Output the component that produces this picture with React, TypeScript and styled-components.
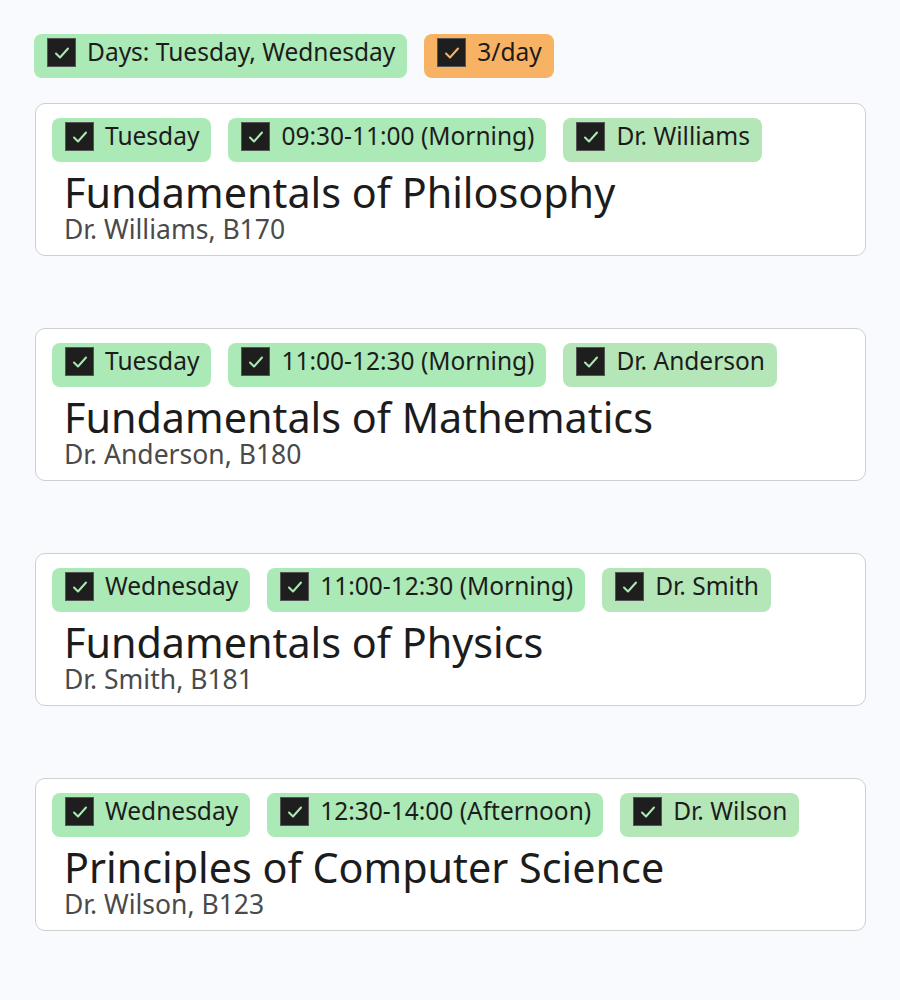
import React from "react";
import styled, { createGlobalStyle } from "styled-components";

const Global = createGlobalStyle`
  html, body { margin: 0; padding: 0; background: #f9fafe; }
  body { font-family: "Noto Sans", "Open Sans", sans-serif; color: #1c1c1c; }
`;

const Page = styled.div`
  padding: 34px 34px 40px 34px;
  display: flex;
  flex-direction: column;
  gap: 25px;
`;

const CardList = styled.div`
  display: flex;
  flex-direction: column;
  gap: 72px;
`;

const ChipRow = styled.div`
  display: flex;
  gap: 17px;
  flex-wrap: wrap;
`;

const Chip = styled.div<{ $tone: "green" | "light" | "orange" }>`
  display: flex;
  align-items: center;
  gap: 11px;
  height: 44px;
  box-sizing: border-box;
  padding: 0 12px 9px 13px;
  border-radius: 8px;
  font-size: 24.5px;
  color: #1c1c1c;
  white-space: nowrap;
  background: ${(p) =>
    p.$tone === "orange" ? "#f8b264" : p.$tone === "light" ? "#b5e6b8" : "#abe9b6"};
`;

const Box = styled.span`
  width: 29px;
  height: 29px;
  box-sizing: border-box;
  background: #1e1e1e;
  border: 1px solid #555;
  display: flex;
  align-items: center;
  justify-content: center;
  flex-shrink: 0;
  margin-top: 2px;
`;

const Card = styled.div`
  margin-left: 1px;
  width: 831px;
  box-sizing: border-box;
  height: 153px;
  background: #fff;
  border: 1.5px solid #cfcfcf;
  border-radius: 10px;
  padding: 14px 16px 0 16px;
`;

const Title = styled.div`
  font-size: 41.3px;
  line-height: 1.15;
  margin: 7px 0 0 12px;
  color: #1c1c1c;
  white-space: nowrap;
`;

const Sub = styled.div`
  font-size: 26.5px;
  line-height: 1;
  margin: 0 0 0 12px;
  color: #4a4a4a;
  white-space: nowrap;
`;

const Check: React.FC<{ color: string }> = ({ color }) => (
  <Box>
    <svg width="18" height="18" viewBox="0 0 18 18">
      <path d="M3 9.5 L7 13.5 L15 4.5" fill="none" stroke={color} strokeWidth="2" strokeLinecap="round" strokeLinejoin="round" />
    </svg>
  </Box>
);

const Tag: React.FC<{ tone?: "green" | "light" | "orange"; children: React.ReactNode }> = ({ tone = "green", children }) => (
  <Chip $tone={tone}>
    <Check color={tone === "orange" ? "#f8b264" : "#abe9b6"} />
    <span>{children}</span>
  </Chip>
);

const courses = [
  { day: "Tuesday", time: "09:30-11:00 (Morning)", prof: "Dr. Williams", title: "Fundamentals of Philosophy", room: "B170" },
  { day: "Tuesday", time: "11:00-12:30 (Morning)", prof: "Dr. Anderson", title: "Fundamentals of Mathematics", room: "B180" },
  { day: "Wednesday", time: "11:00-12:30 (Morning)", prof: "Dr. Smith", title: "Fundamentals of Physics", room: "B181" },
  { day: "Wednesday", time: "12:30-14:00 (Afternoon)", prof: "Dr. Wilson", title: "Principles of Computer Science", room: "B123" },
];

export default function App() {
  return (
    <>
      <Global />
      <Page>
        <ChipRow>
          <Tag>Days: Tuesday, Wednesday</Tag>
          <Tag tone="orange">3/day</Tag>
        </ChipRow>
        <CardList>
          {courses.map((c) => (
            <Card key={c.title}>
              <ChipRow>
                <Tag>{c.day}</Tag>
                <Tag>{c.time}</Tag>
                <Tag tone="light">{c.prof}</Tag>
              </ChipRow>
              <Title>{c.title}</Title>
              <Sub>
                {c.prof}, {c.room}
              </Sub>
            </Card>
          ))}
        </CardList>
      </Page>
    </>
  );
}
